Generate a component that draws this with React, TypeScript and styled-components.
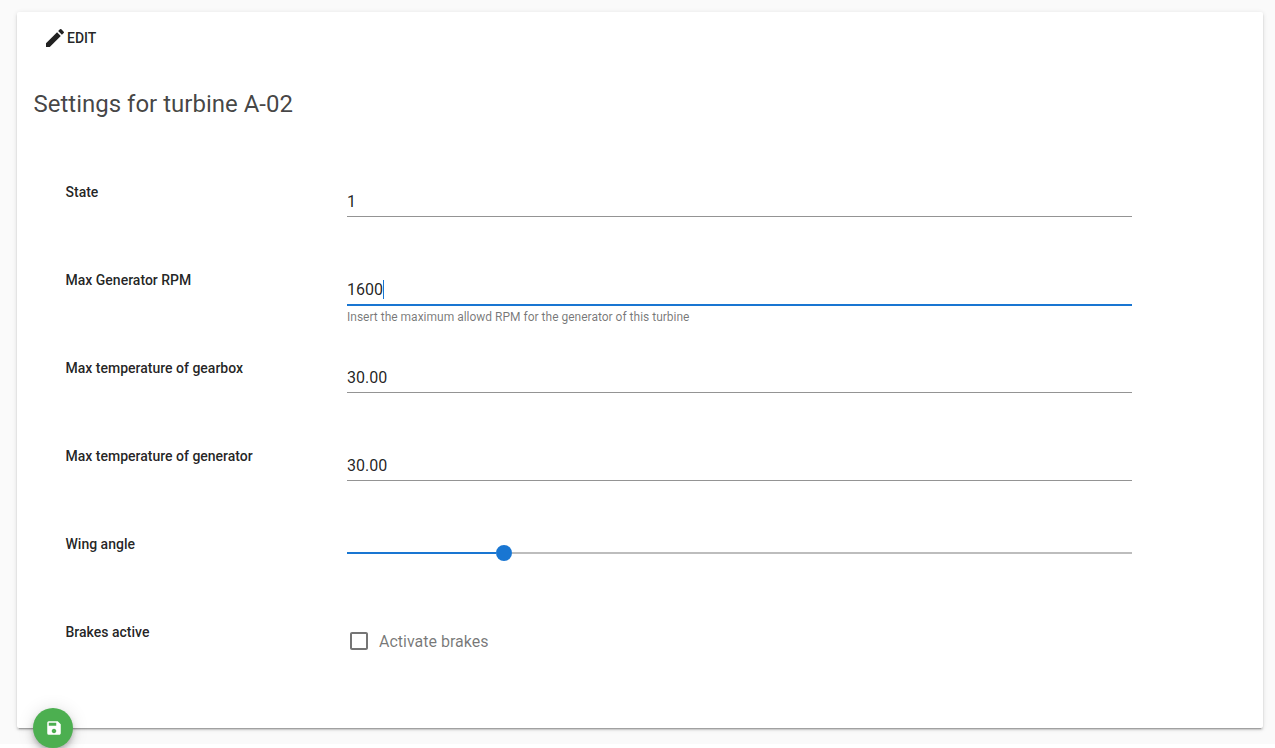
import React from "react";
import styled, { createGlobalStyle } from "styled-components";

const GlobalStyle = createGlobalStyle`
  *, *::before, *::after { box-sizing: border-box; }
  html { background: #fff; }
  body {
    margin: 0;
    font-family: Roboto, "Liberation Sans", sans-serif;
    color: rgba(0, 0, 0, 0.87);
  }
`;

const Shell = styled.div`
  height: 748px;
  overflow: hidden;
  background: #fff;
`;

const Page = styled.main`
  height: 744px;
  padding: 12px 12px 16px 17px;
  background: #fafafa;
`;

const Card = styled.section`
  position: relative;
  height: 716px;
  background: #fff;
  border-radius: 2px;
  box-shadow: 0 3px 1px -2px rgba(0, 0, 0, 0.2), 0 2px 2px 0 rgba(0, 0, 0, 0.14),
    0 1px 5px 0 rgba(0, 0, 0, 0.12);
`;

const EditButton = styled.button`
  display: flex;
  align-items: center;
  height: 52px;
  padding: 0 16px 0 25.5px;
  border: 0;
  background: none;
  color: inherit;
  font: 500 14px/20px Roboto, "Liberation Sans", sans-serif;
  gap: 0.5px;
  text-transform: uppercase;
`;

const Title = styled.h1`
  margin: 24px 0 0;
  padding-left: 16.5px;
  font-size: 24px;
  line-height: 32px;
  font-weight: 400;
  color: rgba(0, 0, 0, 0.74);
`;

const Form = styled.form`
  display: flex;
  flex-direction: column;
  padding: 44px 131px 0 48px;
`;

const Row = styled.div`
  display: grid;
  grid-template-columns: 282px 1fr;
  height: 88px;
`;

const Label = styled.label`
  padding: 18px 0 0 0.5px;
  font-size: 14px;
  line-height: 20px;
  font-weight: 500;
`;

const Control = styled.div`
  padding-top: 22px;
`;

const Field = styled.div<{ $focused?: boolean }>`
  display: flex;
  align-items: center;
  height: ${(p) => (p.$focused ? 32 : 31)}px;
  padding-top: 1px;
  border-bottom: ${(p) => (p.$focused ? "2px solid #1976d2" : "1px solid #949494")};
  font-size: 16px;
  line-height: 19px;
`;

const Caret = styled.span`
  width: 1px;
  height: 19px;
  background: #1976d2;
`;

const Hint = styled.div`
  margin-top: 5px;
  font-size: 12px;
  line-height: 12px;
  color: rgba(0, 0, 0, 0.54);
`;

const Slider = styled.div`
  display: flex;
  align-items: center;
  height: 30px;
`;

const Track = styled.span<{ $filled?: boolean }>`
  flex: ${(p) => (p.$filled ? "0 0 149px" : "1")};
  height: 2px;
  background: ${(p) => (p.$filled ? "#1976d2" : "#bdbdbd")};
`;

const Thumb = styled.span`
  width: 16px;
  height: 16px;
  border-radius: 50%;
  background: #1976d2;
`;

const CheckLine = styled.div`
  display: flex;
  align-items: center;
  gap: 8px;
  height: 30px;
  font-size: 16px;
  color: rgba(0, 0, 0, 0.54);
`;

const SaveButton = styled.button`
  position: absolute;
  left: 16px;
  bottom: -20px;
  width: 40px;
  height: 40px;
  display: flex;
  align-items: center;
  justify-content: center;
  padding: 0 0 0 1px;
  border: 0;
  border-radius: 50%;
  background: #4caf50;
  color: #fff;
  box-shadow: 0 3px 5px -1px rgba(0, 0, 0, 0.2), 0 6px 10px 0 rgba(0, 0, 0, 0.14),
    0 1px 18px 0 rgba(0, 0, 0, 0.12);
`;

const Icon = ({ d, size = 24 }: { d: string; size?: number }) => (
  <svg width={size} height={size} viewBox="0 0 24 24" fill="currentColor" aria-hidden="true">
    <path d={d} />
  </svg>
);

const PENCIL =
  "M3 17.25V21h3.75L17.81 9.94l-3.75-3.75L3 17.25zM20.71 7.04a.996.996 0 0 0 0-1.41l-2.34-2.34a.996.996 0 0 0-1.41 0l-1.83 1.83 3.75 3.75 1.83-1.83z";
const SAVE =
  "M17 3H5a2 2 0 0 0-2 2v14a2 2 0 0 0 2 2h14c1.1 0 2-.9 2-2V7l-4-4zm-5 16c-1.66 0-3-1.34-3-3s1.34-3 3-3 3 1.34 3 3-1.34 3-3 3zm3-10H5V5h10v4z";
const CHECKBOX =
  "M19 5v14H5V5h14m0-2H5c-1.1 0-2 .9-2 2v14c0 1.1.9 2 2 2h14c1.1 0 2-.9 2-2V5c0-1.1-.9-2-2-2z";

const fields = [
  { label: "State", value: "1" },
  {
    label: "Max Generator RPM",
    value: "1600",
    focused: true,
    hint: "Insert the maximum allowd RPM for the generator of this turbine",
  },
  { label: "Max temperature of gearbox", value: "30.00" },
  { label: "Max temperature of generator", value: "30.00" },
];

export default function App() {
  return (
    <Shell>
      <GlobalStyle />
      <Page>
        <Card>
          <EditButton type="button">
            <Icon d={PENCIL} />
            Edit
          </EditButton>
          <Title>Settings for turbine A-02</Title>
          <Form>
            {fields.map((f) => (
              <Row key={f.label}>
                <Label>{f.label}</Label>
                <Control>
                  <Field $focused={f.focused}>
                    {f.value}
                    {f.focused && <Caret />}
                  </Field>
                  {f.hint && <Hint>{f.hint}</Hint>}
                </Control>
              </Row>
            ))}
            <Row>
              <Label>Wing angle</Label>
              <Control>
                <Slider>
                  <Track $filled />
                  <Thumb />
                  <Track />
                </Slider>
              </Control>
            </Row>
            <Row>
              <Label>Brakes active</Label>
              <Control>
                <CheckLine>
                  <Icon d={CHECKBOX} />
                  Activate brakes
                </CheckLine>
              </Control>
            </Row>
          </Form>
          <SaveButton type="button" aria-label="Save">
            <Icon d={SAVE} size={18} />
          </SaveButton>
        </Card>
      </Page>
    </Shell>
  );
}
